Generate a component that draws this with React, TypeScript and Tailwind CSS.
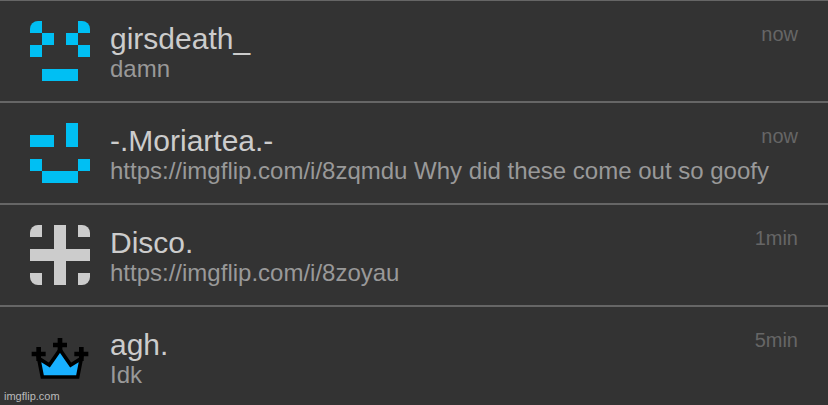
import React from 'react';
import { clsx } from 'clsx';

type PixelIconProps = {
    rows: string[];
    className: string;
};

// 5x5 avatars, "#" is a filled square
const PixelIcon = ({ rows, className }: PixelIconProps) => (
    <svg viewBox="0 0 60 60" shapeRendering="crispEdges" className={clsx("block size-[60px] shrink-0 rounded-lg fill-current", className)} aria-hidden="true">
        {rows.map((row, y) =>
            row.split('').map((cell, x) =>
                cell === '#' ? <rect key={`${x}-${y}`} x={x * 12} y={y * 12} width="12" height="12" /> : null
            )
        )}
    </svg>
);

const CrownIcon = () => (
    <svg viewBox="30 6 180 180" className="block size-[60px] shrink-0" aria-hidden="true">
        <path d="M56 100 L88 120 L120 74 L152 120 L184 100 L173 156 L67 156 Z" fill="#18b0ff" stroke="#000" strokeWidth="11" />
        <path d="M113 39h14v14h14v14h-14v14h-14v-14h-14v-14h14z" />
        <path d="M49 66h14v14h14v14h-14v14h-14v-14h-14v-14h14z" />
        <path d="M177 66h14v14h14v14h-14v14h-14v-14h-14v-14h14z" />
    </svg>
);

const messages = [
    {
        name: 'girsdeath_',
        text: 'damn',
        time: 'now',
        icon: <PixelIcon className="text-[#00bff3]" rows={['#...#', '.#.#.', '#...#', '.....', '.###.']} />,
    },
    {
        name: '-.Moriartea.-',
        text: 'https://imgflip.com/i/8zqmdu Why did these come out so goofy',
        time: 'now',
        icon: <PixelIcon className="text-[#00bff3]" rows={['...#.', '##.#.', '.....', '#...#', '.###.']} />,
    },
    {
        name: 'Disco.',
        text: 'https://imgflip.com/i/8zoyau',
        time: '1min',
        icon: <PixelIcon className="text-[#cccccc]" rows={['#.#.#', '..#..', '#####', '..#..', '#.#.#']} />,
    },
    {
        name: 'agh.',
        text: 'Idk',
        time: '5min',
        icon: <CrownIcon />,
    },
];

const App = () => {
    return (
        <main className="relative min-h-screen border-t border-[#666666] bg-[#333333] font-['Liberation_Sans',Arial,sans-serif]">
            <ul>
                {messages.map((message) => (
                    <li
                        key={message.name}
                        className="flex gap-5 border-b-2 border-[#666666] px-[30px] py-5 last:border-b-0 last:pb-4"
                    >
                        {message.icon}
                        <div className="flex min-w-0 flex-1 flex-col gap-[3px] pt-[3px]">
                            <div className="flex items-start justify-between">
                                <h2 className="text-[30px] leading-[30px] text-[#cccccc]">{message.name}</h2>
                                <time className="text-[20px] leading-[20px] text-[#666666]">{message.time}</time>
                            </div>
                            <p className="text-[24px] leading-[24px] wrap-break-word text-[#999999]">{message.text}</p>
                        </div>
                    </li>
                ))}
            </ul>
            <footer className="absolute bottom-px left-1 text-[11px] leading-4 text-[#bbbbbb]">imgflip.com</footer>
        </main>
    );
};

export default App;
